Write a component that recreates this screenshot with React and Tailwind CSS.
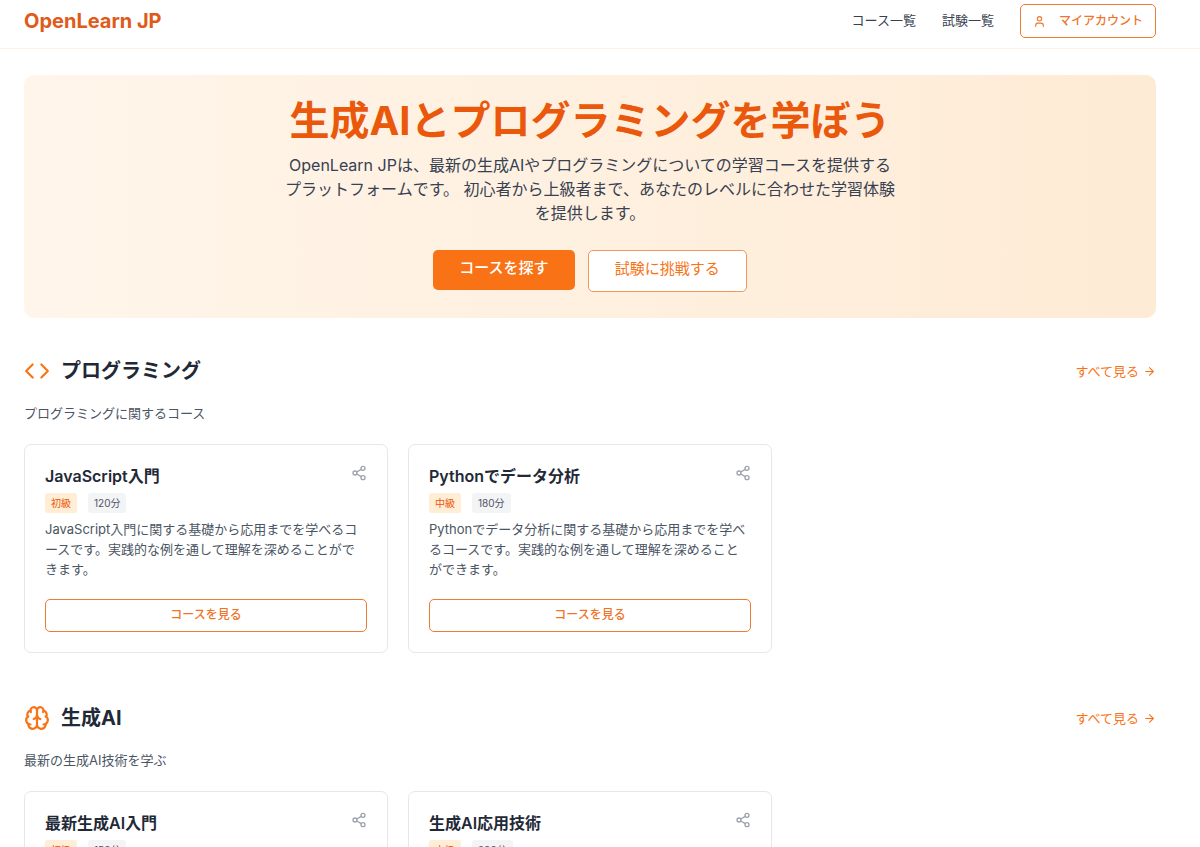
import React from "react";
import { ArrowRight, Brain, Code, Share2, User } from "lucide-react";

const sections = [
  {
    title: "プログラミング",
    Icon: Code,
    description: "プログラミングに関するコース",
    courses: [
      { title: "JavaScript入門", level: "初級", minutes: 120 },
      { title: "Pythonでデータ分析", level: "中級", minutes: 180 },
    ],
  },
  {
    title: "生成AI",
    Icon: Brain,
    description: "最新の生成AI技術を学ぶ",
    courses: [
      { title: "最新生成AI入門", level: "初級", minutes: 150 },
      { title: "生成AI応用技術", level: "上級", minutes: 200 },
    ],
  },
];

function Header() {
  return (
    <header className="flex items-center justify-between border-b border-[#fff0e8] pt-1 pr-11 pb-[10px] pl-6">
      <a href="#" className="text-[20px] leading-7 font-bold text-[#e05a1a]">
        OpenLearn JP
      </a>
      <nav className="flex items-center gap-[26px] text-[13px] text-[#374151]">
        <a href="#courses">コース一覧</a>
        <a href="#exams">試験一覧</a>
        <button
          type="button"
          className="flex h-[34px] items-center gap-[13px] rounded-[5px] border border-[#ee7a35] px-3 text-[12px] font-medium text-[#f0752b]"
        >
          <User size={13} />
          マイアカウント
        </button>
      </nav>
    </header>
  );
}

function Hero() {
  return (
    <section className="flex flex-col items-center rounded-[10px] bg-linear-to-r from-[#fff5ea] to-[#feebd5] px-6 py-[26px] text-center">
      <h1 className="text-[40px] leading-[40px] font-bold text-[#ea580c]">
        生成AIとプログラミングを学ぼう
      </h1>
      <p className="mt-3 max-w-[616px] text-[16px] leading-6 text-[#374151]">
        OpenLearn JPは、最新の生成AIやプログラミングについての学習コースを提供するプラットフォームです。
        初心者から上級者まで、あなたのレベルに合わせた学習体験を提供します。
      </p>
      <div className="mt-[25px] flex items-start gap-[13px] text-[15px]">
        <button
          type="button"
          className="h-10 rounded-[5px] bg-[#f97316] px-[26px] pb-[3px] font-medium text-white"
        >
          コースを探す
        </button>
        <button
          type="button"
          className="h-[42px] rounded-[5px] border border-[#f0985f] bg-white px-[26px] pb-[3px] text-[#f97316]"
        >
          試験に挑戦する
        </button>
      </div>
    </section>
  );
}

function CourseCard({ title, level, minutes }) {
  return (
    <article className="flex flex-col rounded-[7px] border border-[#e5e7eb] bg-white p-5">
      <div className="flex items-start justify-between">
        <h3 className="text-[16px] leading-[22px] font-semibold text-[#1f2937]">{title}</h3>
        <button type="button" aria-label="共有" className="text-[#9ca3af]">
          <Share2 size={16} />
        </button>
      </div>
      <div className="mt-[6px] flex gap-[11px] text-[10px] leading-5">
        <span className="rounded-[3px] bg-[#ffedd5] px-[6px] text-[#ea580c]">{level}</span>
        <span className="rounded-[3px] bg-[#f3f4f6] px-[6px] text-[#4b5563]">{`${minutes}分`}</span>
      </div>
      <p className="mt-[6px] text-[13px] leading-5 text-[#4b5563]">
        {`${title}に関する基礎から応用までを学べるコースです。実践的な例を通して理解を深めることができます。`}
      </p>
      <button
        type="button"
        className="mt-5 h-[33px] w-full rounded-[5px] border border-[#ee7a35] pb-[2px] text-[12px] font-medium text-[#f0752b]"
      >
        コースを見る
      </button>
    </article>
  );
}

function CourseSection({ title, Icon, description, courses }) {
  return (
    <section>
      <div className="flex items-center justify-between">
        <div className="flex items-center gap-[11px]">
          <Icon size={26} className="text-[#f97316]" />
          <h2 className="text-[20px] leading-7 font-bold text-[#1f2937]">{title}</h2>
        </div>
        <a href="#all" className="flex items-center gap-1 text-[13px] leading-5 text-[#f97316]">
          すべて見る
          <ArrowRight size={13} />
        </a>
      </div>
      <p className="mt-[18px] text-[13px] leading-5 text-[#4b5563]">{description}</p>
      <div className="mt-[21px] grid grid-cols-3 gap-5">
        {courses.map((course) => (
          <CourseCard key={course.title} {...course} />
        ))}
      </div>
    </section>
  );
}

export default function App() {
  return (
    <div lang="ja" className="bg-white font-['Inter','Noto_Sans_CJK_JP',sans-serif]">
      <Header />
      <main className="pt-[26px] pr-11 pb-12 pl-6">
        <Hero />
        <div className="mt-[39px] flex flex-col gap-[51px]">
          {sections.map((section) => (
            <CourseSection key={section.title} {...section} />
          ))}
        </div>
      </main>
    </div>
  );
}
